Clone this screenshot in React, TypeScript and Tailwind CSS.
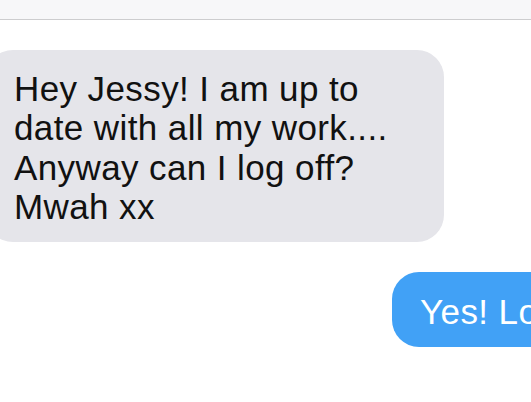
import React from "react";

const App = () => {
  return (
    <div
      className="w-[531px] h-[402px] overflow-hidden bg-white"
      style={{ fontFamily: '"Liberation Sans", Arial, sans-serif' }}
    >
      <div className="h-[20px] bg-[#f7f7f9] border-b border-[#cdcdcf]" />
      <div className="mt-[30px] flex">
        <div className="ml-[-14px] w-[458px] rounded-[27px] bg-[#e5e5ea] pl-[28px] pt-[19px] pb-[16px] text-[35px] leading-[39.3px] tracking-[0.4px] text-[#111111]">
          Hey Jessy! I am up to
          <br />
          date with all my work....
          <br />
          Anyway can I log off?
          <br />
          Mwah xx
        </div>
      </div>
      <div className="mt-[30px] flex">
        <div className="ml-[392px] shrink-0 whitespace-nowrap rounded-[27px] bg-[#41a1f6] pl-[28px] pr-[28px] pt-[20px] pb-[16px] text-[35px] leading-[39px] tracking-[0.4px] text-white">
          Yes! Log off!
        </div>
      </div>
    </div>
  );
};

export default App;
